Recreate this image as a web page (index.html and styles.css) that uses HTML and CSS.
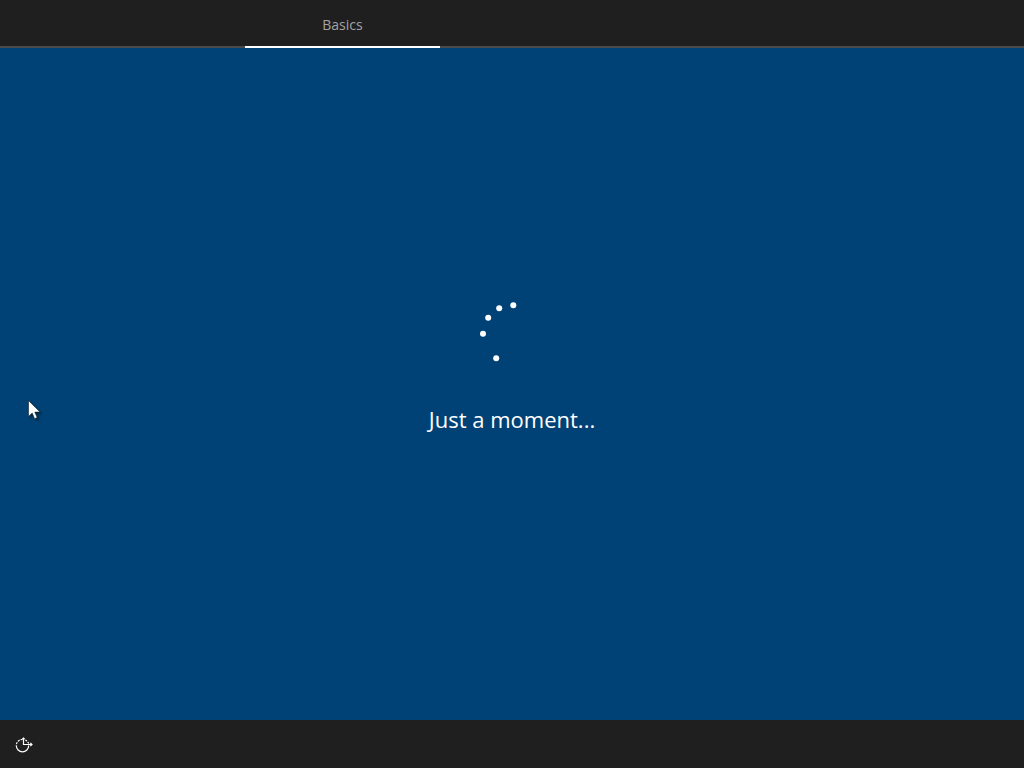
FILE: index.html
```html
<!DOCTYPE html>
<html lang="en">
<head>
  <meta charset="UTF-8" />
  <meta name="viewport" content="width=device-width, initial-scale=1" />
  <title>Setup</title>
  <link rel="stylesheet" href="styles.css">
</head>
<body>

  <header>
    <nav class="tabs">
      <a href="#basics" class="tab active" aria-current="step">Basics</a>
    </nav>
  </header>

  <main id="basics">
    <svg class="spinner" viewBox="0 0 60 60" aria-hidden="true">
      <circle cx="31.3" cy="5.3" r="3" />
      <circle cx="17.2" cy="8.2" r="3" />
      <circle cx="6.2" cy="17.8" r="3" />
      <circle cx="1" cy="33.8" r="3" />
      <circle cx="14.2" cy="58.2" r="3" />
    </svg>
    <p class="status" role="status">Just a moment...</p>
  </main>

  <footer>
    <button type="button" class="access-btn" aria-label="Ease of Access">
      <svg viewBox="0 0 18 18" aria-hidden="true">
        <path class="dashed" d="M7.5 4.4A6.2 6.2 0 0 0 1.3 10.6" />
        <path d="M1.3 10.6A6.2 6.2 0 0 0 13.7 10.6" />
        <path class="dashed" d="M13.7 8.5A6.2 6.2 0 0 0 9.5 4.7" />
        <path d="M8.5 3v6.5H17M7.3 4.2l1.2-1.2 1.2 1.2M15.3 7.8l1.7 1.7-1.7 1.7" />
      </svg>
    </button>
  </footer>

  <svg class="cursor" viewBox="0 0 12 19" aria-hidden="true">
    <path d="M0.5 0.5v16l3.7-3.4 2.4 5.6 2.6-1.1-2.4-5.5h5.2z" />
  </svg>

</body>
</html>
```
FILE: styles.css
```css
* {
  box-sizing: border-box;
}

body {
  margin: 0;
  min-height: 100vh;
  display: flex;
  flex-direction: column;
  background: #004275;
  color: white;
  font-family: "Open Sans", "Noto Sans", sans-serif;
}

header {
  background: #1f1f1f;
}

.tabs {
  display: grid;
  grid-template-columns: 245fr 195fr 584fr;
  height: 48px;
  box-shadow: inset 0 -2px #4a4a4a;
}

.tab {
  grid-column: 2;
  display: flex;
  align-items: center;
  justify-content: center;
  padding-top: 2px;
  border-bottom: 2px solid transparent;
  color: #a3a3a3;
  font-size: 14px;
  text-decoration: none;
}

.tab.active {
  border-bottom-color: white;
}

main {
  flex: 1;
  display: flex;
  flex-direction: column;
  align-items: center;
  justify-content: center;
  gap: 43px;
  padding-bottom: 33px;
}

.spinner {
  width: 60px;
  height: 60px;
  overflow: visible;
  fill: white;
}

.status {
  margin: 0;
  font-size: 22px;
  line-height: 32px;
}

footer {
  display: flex;
  height: 48px;
  background: #1f1f1f;
}

.access-btn {
  display: flex;
  align-items: center;
  justify-content: center;
  width: 48px;
  padding: 0;
  border: none;
  background: none;
  cursor: pointer;
}

.access-btn svg {
  width: 18px;
  height: 18px;
  fill: none;
  stroke: white;
  stroke-width: 1.2;
}

.access-btn .dashed {
  stroke-dasharray: 2 1;
}

/* mouse pointer, drawn over the page */
.cursor {
  position: absolute;
  left: 28px;
  top: 400px;
  width: 12px;
  height: 19px;
  overflow: visible;
  fill: white;
  stroke: #10202c;
  stroke-width: 0.6;
  filter: drop-shadow(2px 2px 1px rgba(0, 0, 0, 0.4));
}
```
